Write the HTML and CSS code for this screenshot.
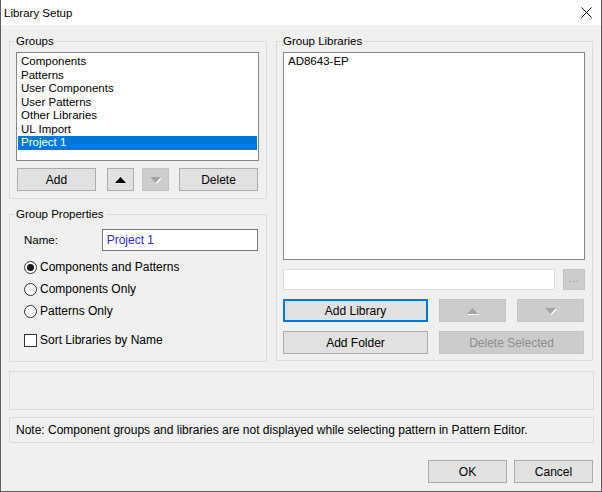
FILE: index.html
```html
<!DOCTYPE html>
<html lang="en">
<head>
  <meta charset="UTF-8">
  <title>Library Setup</title>
  <link rel="stylesheet" href="styles.css">
</head>
<body>
  <div class="dialog">
    <div class="titlebar">
      <span class="title">Library Setup</span>
      <svg class="close" width="11" height="11" viewBox="0 0 11 11">
        <path d="M0.5 0.5 L10.5 10.5 M10.5 0.5 L0.5 10.5" stroke="#000" stroke-width="1" fill="none"/>
      </svg>
    </div>

    <div class="content">
      <div class="columns">
        <div class="col-left">
          <fieldset class="box groups">
            <legend>Groups</legend>
            <ul class="listbox groups-list">
              <li>Components</li>
              <li>Patterns</li>
              <li>User Components</li>
              <li>User Patterns</li>
              <li>Other Libraries</li>
              <li>UL Import</li>
              <li class="selected">Project 1</li>
            </ul>
            <div class="btn-row">
              <button class="btn btn-add">Add</button>
              <button class="btn btn-up">
                <svg width="11" height="6" viewBox="0 0 11 6"><path d="M5.5 0 L11 6 L0 6 Z" fill="#000"/></svg>
              </button>
              <button class="btn btn-down disabled">
                <svg width="12" height="7" viewBox="0 0 12 7"><path d="M1 1 L12 1 L6.5 7 Z" fill="#fff"/><path d="M0 0 L11 0 L5.5 6 Z" fill="#a3a3a3"/></svg>
              </button>
              <button class="btn btn-delete">Delete</button>
            </div>
          </fieldset>

          <fieldset class="box props">
            <legend>Group Properties</legend>
            <div class="name-row">
              <span class="name-label">Name:</span>
              <div class="textbox name-input">Project 1</div>
            </div>
            <div class="option"><span class="radio checked"></span>Components and Patterns</div>
            <div class="option"><span class="radio"></span>Components Only</div>
            <div class="option"><span class="radio"></span>Patterns Only</div>
            <div class="option sort"><span class="check"></span>Sort Libraries by Name</div>
          </fieldset>
        </div>

        <fieldset class="box libs">
          <legend>Group Libraries</legend>
          <ul class="listbox libs-list">
            <li>AD8643-EP</li>
          </ul>
          <div class="path-row">
            <div class="textbox path-input"></div>
            <button class="btn btn-browse disabled">...</button>
          </div>
          <div class="lib-row">
            <button class="btn btn-wide focused">Add Library</button>
            <button class="btn btn-arrow disabled">
              <svg width="12" height="7" viewBox="0 0 12 7"><path d="M1 7 L12 7 L11 6 L1 6 Z" fill="#fff"/><path d="M5.5 0 L11 6 L0 6 Z" fill="#a3a3a3"/></svg>
            </button>
            <button class="btn btn-arrow disabled">
              <svg width="12" height="7" viewBox="0 0 12 7"><path d="M1 1 L12 1 L6.5 7 Z" fill="#fff"/><path d="M0 0 L11 0 L5.5 6 Z" fill="#a3a3a3"/></svg>
            </button>
          </div>
          <div class="lib-row">
            <button class="btn btn-wide">Add Folder</button>
            <button class="btn btn-wide disabled">Delete Selected</button>
          </div>
        </fieldset>
      </div>

      <div class="panel empty"></div>
      <div class="panel note">Note: Component groups and libraries are not displayed while selecting pattern in Pattern Editor.</div>

      <div class="footer">
        <button class="btn btn-ok">OK</button>
        <button class="btn btn-cancel">Cancel</button>
      </div>
    </div>
  </div>
</body>
</html>
```

FILE: styles.css
```css
* {
  margin: 0;
  padding: 0;
  box-sizing: border-box;
}

body {
  background: #f0f0f0;
  font-family: "Liberation Sans", Arial, sans-serif;
  font-size: 11.5px;
  color: #000;
}

.dialog {
  width: 602px;
  height: 492px;
  background: #f0f0f0;
  border: 1px solid #5e5e5e;
  border-top: none;
}

.titlebar {
  height: 25px;
  background: #fff;
  display: flex;
  align-items: center;
  justify-content: space-between;
  padding: 0 9px 0 3px;
  font-size: 11.5px;
}
.titlebar .close {
  display: block;
}

.content {
  padding: 9px 8px 0 8px;
}

.columns {
  display: flex;
  gap: 9px;
  align-items: flex-start;
}

.box {
  border: 1px solid #dcdcdc;
  min-width: 0;
}
.box legend {
  line-height: 14px;
  padding: 0 2px;
  margin-left: -2px;
}

.groups {
  width: 258px;
  padding: 4px 7px 7px 6px;
}
.props {
  width: 258px;
  margin-top: 8px;
  padding: 8px 8px 10px 14px;
}
.props legend {
  margin-left: -10px;
}
.libs {
  width: 317px;
  padding: 4px 7px 6px 6px;
}

.listbox {
  list-style: none;
  background: #fff;
  border: 1px solid #828790;
  padding: 2px 1px;
}
.listbox li {
  line-height: 13.5px;
  padding-left: 3px;
  white-space: nowrap;
}
.listbox li.selected {
  background: #0078d7;
  color: #fff;
}
.groups-list {
  width: 243px;
  height: 109px;
}
.libs-list {
  width: 302px;
  height: 208px;
}

.btn {
  font-family: inherit;
  font-size: 12px;
  color: #000;
  background: #e1e1e1;
  border: 1px solid #adadad;
  height: 23px;
  display: flex;
  align-items: center;
  justify-content: center;
}
.btn svg {
  display: block;
}
.btn.disabled {
  background: #cccccc;
  border-color: #c4c4c4;
  color: #8e8e8e;
}
.btn.focused {
  border: 2px solid #0078d7;
}

.btn-row {
  display: flex;
  margin-top: 7px;
  margin-left: 1px;
}
.btn-add,
.btn-delete {
  width: 79px;
}
.btn-up {
  width: 27px;
  margin-left: 11px;
}
.btn-down {
  width: 27px;
  margin-left: 8px;
  padding-top: 2px;
}
.btn-delete {
  margin-left: 10px;
}

.textbox {
  background: #fff;
  border: 1px solid #7a7a7a;
}

.name-row {
  display: flex;
  align-items: center;
  height: 22px;
}
.name-label {
  width: 78px;
}
.name-input {
  width: 157px;
  height: 22px;
  line-height: 20px;
  padding-left: 4px;
  color: #2e2ec8;
  font-size: 12px;
}

.option {
  display: flex;
  align-items: center;
  height: 22px;
  font-size: 12px;
}
.name-row + .option {
  margin-top: 5px;
}
.option.sort {
  margin-top: 7px;
}
.radio,
.check {
  width: 13px;
  height: 13px;
  border: 1px solid #333;
  background: #fff;
  margin-right: 3px;
  display: flex;
  align-items: center;
  justify-content: center;
}
.radio {
  border-radius: 50%;
}
.radio.checked::after {
  content: "";
  width: 7px;
  height: 7px;
  border-radius: 50%;
  background: #1a1a1a;
}

.path-row {
  display: flex;
  align-items: center;
  margin-top: 9px;
}
.path-input {
  width: 272px;
  height: 21px;
  border-color: #dcdcdc;
}
.btn-browse {
  width: 22px;
  height: 21px;
  margin-left: 8px;
  font-size: 10px;
  letter-spacing: 1px;
  padding-bottom: 2px;
}

.lib-row {
  display: flex;
  gap: 11px;
  margin-top: 9px;
}
.btn-wide {
  width: 145px;
}
.btn-arrow {
  width: 67px;
  padding-top: 2px;
}

.panel {
  width: 585px;
  border: 1px solid #dcdcdc;
}
.empty {
  height: 39px;
  margin-top: 9px;
}
.note {
  height: 26px;
  margin-top: 7px;
  padding-left: 6px;
  line-height: 24px;
  font-size: 12px;
}

.footer {
  display: flex;
  justify-content: flex-end;
  gap: 7px;
  margin-top: 17px;
}
.btn-ok,
.btn-cancel {
  width: 79px;
}
```
